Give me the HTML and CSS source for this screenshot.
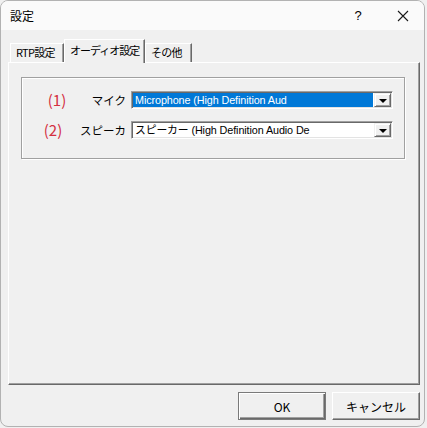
FILE: index.html
```html
<!DOCTYPE html>
<html lang="ja">
<head>
<meta charset="utf-8">
<title>設定</title>
<link rel="stylesheet" href="styles.css">
</head>
<body>
<div class="window">
  <div class="titlebar">
    <span class="title">設定</span>
    <span class="help">?</span>
    <span class="close">
      <svg width="12" height="12" viewBox="0 0 12 12"><path d="M1 1 L11 11 M11 1 L1 11" stroke="#1a1a1a" stroke-width="1.1" fill="none"/></svg>
    </span>
  </div>
  <div class="body">
    <div class="tabs">
      <div class="tab tab-rtp">RTP設定</div>
      <div class="tab tab-audio active">オーディオ設定</div>
      <div class="tab tab-other">その他</div>
    </div>
    <div class="panel">
      <div class="group">
        <div class="row">
          <span class="num num1">(1)</span>
          <span class="label">マイク</span>
          <div class="combo">
            <span class="value selected">Microphone (High Definition Aud</span>
            <span class="drop"><span class="arrow"></span></span>
          </div>
        </div>
        <div class="row">
          <span class="num num2">(2)</span>
          <span class="label">スピーカ</span>
          <div class="combo">
            <span class="value">スピーカー (High Definition Audio De</span>
            <span class="drop"><span class="arrow"></span></span>
          </div>
        </div>
      </div>
    </div>
    <div class="buttons">
      <button class="btn default">OK</button>
      <button class="btn">キャンセル</button>
    </div>
  </div>
</div>
</body>
</html>
```
FILE: styles.css
```css
html, body {
  margin: 0;
  padding: 0;
  background: #f0f0f0;
  width: 427px;
  height: 428px;
  overflow: hidden;
}

.window {
  box-sizing: border-box;
  width: 425px;
  height: 427px;
  border: 1px solid #b2b2b2;
  border-radius: 8px;
  overflow: hidden;
  background: #f0f0f0;
  font-family: "Noto Sans CJK JP", "Liberation Sans", sans-serif;
  font-size: 12px;
  color: #000;
}

.titlebar {
  height: 29px;
  display: flex;
  align-items: center;
  background: #fafafa;
}

.title {
  flex: 1;
  padding-left: 9px;
  font-size: 12px;
  line-height: 1;
}

.help {
  width: 46px;
  text-align: center;
  font-family: "Liberation Sans", sans-serif;
  font-size: 13px;
  line-height: 1;
}

.close {
  width: 43px;
  height: 29px;
  display: flex;
  align-items: center;
  justify-content: center;
}

.body {
  padding: 0 4px 0 7px;
}

.tabs {
  margin-top: 9px;
  height: 23px;
  display: flex;
  align-items: flex-end;
  padding-left: 2px;
  position: relative;
  z-index: 1;
}

.tab {
  box-sizing: border-box;
  height: 19px;
  border-top: 1px solid #fff;
  border-left: 1px solid #fff;
  border-right: 1px solid #696969;
  box-shadow: inset -1px 0 0 #a0a0a0;
  background: #f0f0f0;
  font-size: 11px;
  letter-spacing: -0.7px;
  line-height: 17px;
  padding-left: 5px;
  white-space: nowrap;
  overflow: hidden;
}

.tab-rtp { width: 54px; }
.tab-audio { width: 81px; padding-left: 5px; letter-spacing: -1px; }
.tab-other { width: 47px; padding-left: 5px; }

.tab.active {
  height: 24px;
  margin-bottom: -1px;
  line-height: 20px;
}

.panel {
  box-sizing: border-box;
  height: 323px;
  border-top: 1px solid #fff;
  border-left: 1px solid #fff;
  border-right: 1px solid #696969;
  border-bottom: 1px solid #696969;
  box-shadow: inset -1px -1px 0 #a0a0a0;
  padding: 14px 0 0 12px;
}

.group {
  box-sizing: border-box;
  width: 384px;
  height: 82px;
  border: 1px solid #a0a0a0;
  box-shadow: 1px 1px 0 #fff, inset 1px 1px 0 #fff;
  padding-top: 13px;
  display: flex;
  flex-direction: column;
  gap: 12px;
}

.row {
  display: flex;
  align-items: center;
  height: 18px;
}

.num {
  width: 32px;
  margin-left: 19px;
  text-align: center;
  color: #d42f3f;
  font-size: 15px;
  line-height: 18px;
}

.num2 { margin-left: 15px; margin-right: 4px; }

.label {
  width: 53px;
  text-align: right;
  font-size: 11.5px;
  line-height: 18px;
  white-space: nowrap;
}

.combo {
  box-sizing: border-box;
  margin-left: 5px;
  width: 262px;
  height: 18px;
  display: flex;
  background: #fff;
  border-style: solid;
  border-width: 1px;
  border-color: #a0a0a0 #fff #fff #a0a0a0;
  box-shadow: inset 1px 1px 0 #696969, inset -1px -1px 0 #e3e3e3;
  padding: 1px;
}

.value {
  flex: 1;
  font-family: "Liberation Sans", "Noto Sans CJK JP", sans-serif;
  font-size: 10.8px;
  letter-spacing: -0.1px;
  line-height: 14px;
  padding-left: 2px;
  white-space: nowrap;
  overflow: hidden;
}

.value.selected {
  background: #0078d7;
  color: #fff;
  margin-right: 1px;
}

.drop {
  box-sizing: border-box;
  width: 17px;
  height: 14px;
  background: #f0f0f0;
  border-style: solid;
  border-width: 1px;
  border-color: #f0f0f0 #696969 #696969 #f0f0f0;
  box-shadow: inset 1px 1px 0 #fff, inset -1px -1px 0 #a0a0a0;
  display: flex;
  align-items: center;
  justify-content: center;
}

.arrow {
  width: 0;
  height: 0;
  border-left: 4px solid transparent;
  border-right: 4px solid transparent;
  border-top: 4px solid #000;
  margin-top: 1px;
}

.buttons {
  display: flex;
  justify-content: flex-end;
  gap: 6px;
  margin-top: 7px;
}

.btn {
  box-sizing: border-box;
  width: 88px;
  height: 28px;
  margin: 0;
  background: #f0f0f0;
  border-style: solid;
  border-width: 1px;
  border-color: #fff #696969 #696969 #fff;
  box-shadow: inset -1px -1px 0 #a0a0a0;
  font-family: "Noto Sans CJK JP", "Liberation Sans", sans-serif;
  font-size: 12px;
  color: #000;
  padding: 0;
}

.btn.default {
  border-color: #7a7a7a;
  box-shadow: inset 1px 1px 0 #fff, inset -1px -1px 0 #696969, inset -2px -2px 0 #a0a0a0;
}
```
